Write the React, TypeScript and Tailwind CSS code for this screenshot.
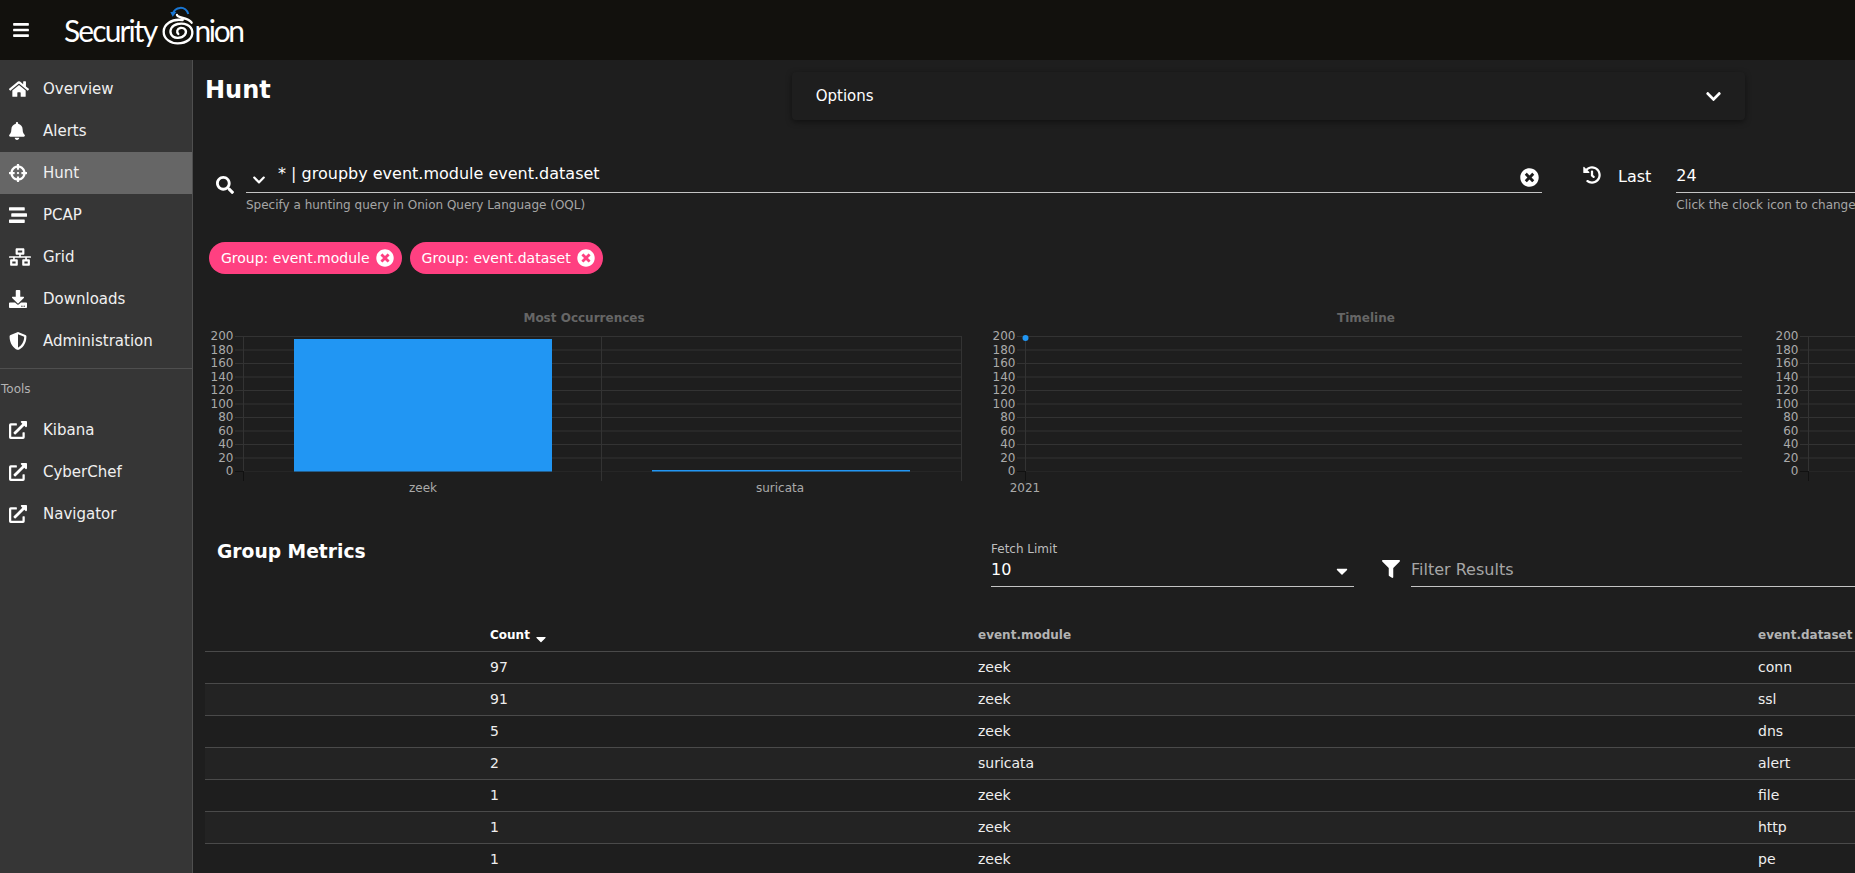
import type { ComponentType } from "react";
import {
  FaBars,
  FaBell,
  FaCaretDown,
  FaChevronDown,
  FaCrosshairs,
  FaDownload,
  FaExternalLinkAlt,
  FaFilter,
  FaHistory,
  FaHome,
  FaNetworkWired,
  FaSearch,
  FaShieldAlt,
  FaStream,
  FaTimesCircle,
} from "react-icons/fa";

type NavItem = { label: string; icon: ComponentType<{ className?: string }>; iconClass: string; active?: boolean };

const mainNav: NavItem[] = [
  { label: "Overview", icon: FaHome, iconClass: "h-[18px] w-[20px]" },
  { label: "Alerts", icon: FaBell, iconClass: "h-[18px] w-[16px]" },
  { label: "Hunt", icon: FaCrosshairs, iconClass: "h-[18px] w-[18px]", active: true },
  { label: "PCAP", icon: FaStream, iconClass: "h-[18px] w-[18px]" },
  { label: "Grid", icon: FaNetworkWired, iconClass: "h-[18px] w-[22px]" },
  { label: "Downloads", icon: FaDownload, iconClass: "h-[18px] w-[18px]" },
  { label: "Administration", icon: FaShieldAlt, iconClass: "h-[18px] w-[18px]" },
];

const toolNav: NavItem[] = [
  { label: "Kibana", icon: FaExternalLinkAlt, iconClass: "h-[18px] w-[18px]" },
  { label: "CyberChef", icon: FaExternalLinkAlt, iconClass: "h-[18px] w-[18px]" },
  { label: "Navigator", icon: FaExternalLinkAlt, iconClass: "h-[18px] w-[18px]" },
];

const rows = [
  { count: 97, module: "zeek", dataset: "conn" },
  { count: 91, module: "zeek", dataset: "ssl" },
  { count: 5, module: "zeek", dataset: "dns" },
  { count: 2, module: "suricata", dataset: "alert" },
  { count: 1, module: "zeek", dataset: "file" },
  { count: 1, module: "zeek", dataset: "http" },
  { count: 1, module: "zeek", dataset: "pe" },
];

const ticks = [200, 180, 160, 140, 120, 100, 80, 60, 40, 20, 0];

function NavRow({ item }: { item: NavItem }) {
  const Icon = item.icon;
  return (
    <div className={`flex h-[42px] items-center pl-[9px] ${item.active ? "bg-[#666666]" : ""}`}>
      <span className="flex w-[34px] shrink-0 items-center">
        <Icon className={`${item.iconClass} text-white`} />
      </span>
      <span className="text-[15px] text-[#f0f0f0]">{item.label}</span>
    </div>
  );
}

function Logo() {
  return (
    <div className="flex items-center font-['Lato',sans-serif] text-[30px] leading-none tracking-[-1.9px] text-white">
      <span>Security</span>
      <svg viewBox="480 15 100 120" className="mb-[10px] ml-[5px] h-[40px] w-[33.3px] shrink-0 overflow-visible">
        <path d="M515 42 C522 20 552 15 562 42" fill="none" stroke="#1976d2" strokeWidth="6" />
        <path d="M508 36 L526 36 L515 50 Z" fill="#1976d2" />
        <path
          d="M528 45 C530 55 560 50 572 68 M545 60 C510 55 488 75 488 95 C488 118 510 130 530 130 C558 130 576 115 574 95 C572 75 550 68 530 72 C512 76 505 90 510 102 C516 116 540 118 552 104 C560 92 550 82 538 84 C528 86 526 96 532 102"
          fill="none"
          stroke="#ffffff"
          strokeWidth="7"
          strokeLinecap="round"
        />
      </svg>
      <span className="tracking-[-2.4px]">nion</span>
    </div>
  );
}

type ChartProps = {
  title: string;
  width?: number;
  gridEnd?: number;
  bars?: { x: number; width: number; top: number }[];
  dividers?: number[];
  labels?: { x: number; text: string }[];
  point?: boolean;
};

function Chart({ title, width = 782.5, gridEnd = 756, bars = [], dividers = [], labels = [], point }: ChartProps) {
  const y = (v: number) => 163 - v * 0.675;
  return (
    <svg width={width} height="192" className="shrink-0 font-['DejaVu_Sans',sans-serif]">
      <text x="379" y="14" textAnchor="middle" fontSize="12" fontWeight="700" fill="#666666">
        {title}
      </text>
      {ticks.map((t) => (
        <g key={t}>
          <line x1="30" x2={gridEnd} y1={y(t) + 0.5} y2={y(t) + 0.5} stroke={t === 0 ? "#262626" : "#333333"} />
          {t === 0 && <line x1="30" x2="38" y1={y(t) + 0.5} y2={y(t) + 0.5} stroke="#111111" />}
          <text x="28.500" y={y(t) + 4} textAnchor="end" fontSize="12" fill="#aaaaaa">
            {t}
          </text>
        </g>
      ))}
      {[38, ...dividers].map((x) => (
        <g key={x}>
          <line x1={x + 0.5} x2={x + 0.5} y1="28" y2="163" stroke="#333333" />
          <line x1={x + 0.5} x2={x + 0.5} y1="163" y2="173" stroke={x === 38 ? "#111111" : "#333333"} />
        </g>
      ))}
      {bars.map((b) => (
        <rect key={b.x} x={b.x} y={b.top} width={b.width} height={163.5 - b.top} fill="#2196f3" />
      ))}
      {labels.map((l) => (
        <text key={l.text} x={l.x} y="184" textAnchor="middle" fontSize="12" fill="#aaaaaa">
          {l.text}
        </text>
      ))}
      {point && <circle cx="38.500" cy="30" r="3" fill="#2196f3" />}
    </svg>
  );
}

function Chip({ label }: { label: string }) {
  return (
    <span className="flex h-8 items-center gap-[6px] rounded-full bg-[#ff4081] pl-3 pr-2 text-[14px] text-white">
      {label}
      <FaTimesCircle className="h-[18px] w-[18px]" />
    </span>
  );
}

export default function App() {
  return (
    <div className="h-[873px] w-[1855px] overflow-hidden bg-[#1e1e1e] font-['DejaVu_Sans',sans-serif] text-white">
      <header className="flex h-[60px] items-center bg-[#12110d] pl-[13px]">
        <FaBars className="h-[18px] w-[16px] text-white" />
        <div className="ml-[35px]">
          <Logo />
        </div>
      </header>
      <div className="flex h-[813px]">
        <aside className="w-[193px] shrink-0 border-r border-[#4f4f4f] bg-[#363636] pt-[8px]">
          {mainNav.map((item) => (
            <NavRow key={item.label} item={item} />
          ))}
          <div className="mt-[6px] border-t border-[#4f4f4f] pt-[12px] pb-[8px] pl-[1px] text-[12px] leading-[16px] text-[#b3b3b3]">
            Tools
          </div>
          <div className="pt-[4px]">
            {toolNav.map((item) => (
              <NavRow key={item.label} item={item} />
            ))}
          </div>
        </aside>
        <main className="w-[2400px] shrink-0 pl-[12px]">
          <div className="flex h-[90px]">
            <h1 className="pt-[14px] text-[24px] font-bold leading-[32px]">Hunt</h1>
            <div className="ml-[521px] mt-[12px] flex h-[48px] w-[953px] items-center justify-between rounded-[4px] bg-[#1e1e1e] pl-[24px] pr-[23px] shadow-[0_2px_6px_rgba(0,0,0,0.45)]">
              <span className="text-[15px]">Options</span>
              <FaChevronDown className="h-[17px] w-[17px]" />
            </div>
          </div>

          <div className="flex h-[92px] items-start pt-[14px]">
            <FaSearch className="ml-[11px] mt-[12px] h-[18px] w-[18px]" />
            <div className="ml-[12px] w-[1296px]">
              <div className="flex h-[29px] items-center border-b border-[#c4c4c4]">
                <FaChevronDown className="ml-[6px] mt-[3px] h-[14px] w-[14px]" />
                <span className="mb-[9px] ml-[12px] text-[16px]">* | groupby event.module event.dataset</span>
                <FaTimesCircle className="mb-[2px] ml-auto mr-[3px] h-[19px] w-[19px]" />
              </div>
              <p className="mt-[4px] text-[12px] leading-[16px] text-[#a6a6a6]">
                Specify a hunting query in Onion Query Language (OQL)
              </p>
            </div>
            <FaHistory className="ml-[41px] mt-[2px] h-[18px] w-[18px]" />
            <span className="ml-[17px] mt-[1px] text-[16px] leading-[24px]">Last</span>
            <div className="ml-[25px] w-[500px]">
              <div className="flex h-[29px] items-center border-b border-[#c4c4c4] pb-[4px] text-[16px]">24</div>
              <p className="mt-[4px] whitespace-nowrap text-[12px] leading-[16px] text-[#a6a6a6]">
                Click the clock icon to change to absolute time
              </p>
            </div>
          </div>

          <div className="flex gap-2 pl-[4px]">
            <Chip label="Group: event.module" />
            <Chip label="Group: event.dataset" />
          </div>

          <div className="mt-[34px] flex">
            <Chart
              title="Most Occurrences"
              width={781.5}
              dividers={[396, 756]}
              bars={[
                { x: 89, width: 258, top: 31 },
                { x: 447, width: 258, top: 162 },
              ]}
              labels={[
                { x: 218, text: "zeek" },
                { x: 575, text: "suricata" },
              ]}
            />
            <Chart title="Timeline" width={783.5} gridEnd={755} point labels={[{ x: 38, text: "2021" }]} />
            <Chart title="Fewest Occurrences" dividers={[396, 756]} />
          </div>

          <div className="mt-[40px] flex h-[79px]">
            <h2 className="-mt-[1px] w-[786px] pl-[12px] text-[18.700px] font-bold leading-[26px]">Group Metrics</h2>
            <div className="mt-[1px] w-[363px]">
              <div className="text-[12px] leading-[16px] text-[#bdbdbd]">Fetch Limit</div>
              <div className="flex h-[30px] items-center justify-between border-b border-[#c4c4c4] pr-[3px] text-[16px]">
                <span className="pb-[4px]">10</span>
                <FaCaretDown className="mb-[2px] h-[18px] w-[18px]" />
              </div>
            </div>
            <FaFilter className="ml-[28px] mt-[20px] h-[18px] w-[18px]" />
            <div className="ml-[11px] mt-[17px] flex h-[30px] w-[900px] items-center border-b border-[#c4c4c4] pb-[4px] text-[16px] text-[#a6a6a6]">
              Filter Results
            </div>
          </div>

          <table className="w-[2300px] table-fixed border-collapse">
            <colgroup>
              <col className="w-[285px]" />
              <col className="w-[488px]" />
              <col className="w-[780px]" />
              <col />
            </colgroup>
            <thead>
              <tr className="h-[32px] border-b border-[#4a4a4a] text-left text-[12px] font-bold text-[#b3b3b3]">
                <th />
                <th className="text-white">
                  <span className="inline-flex items-center gap-[3px]">
                    Count
                    <FaCaretDown className="mt-[8px] h-[16px] w-[16px]" />
                  </span>
                </th>
                <th>event.module</th>
                <th>event.dataset</th>
              </tr>
            </thead>
            <tbody>
              {rows.map((row, i) => (
                <tr
                  key={row.dataset}
                  className={`h-[32px] border-b border-[#4a4a4a] text-[14px] text-[#eeeeee] ${i % 2 === 1 ? "bg-[#232323]" : ""}`}
                >
                  <td />
                  <td>{row.count}</td>
                  <td>{row.module}</td>
                  <td>{row.dataset}</td>
                </tr>
              ))}
            </tbody>
          </table>
        </main>
      </div>
    </div>
  );
}
